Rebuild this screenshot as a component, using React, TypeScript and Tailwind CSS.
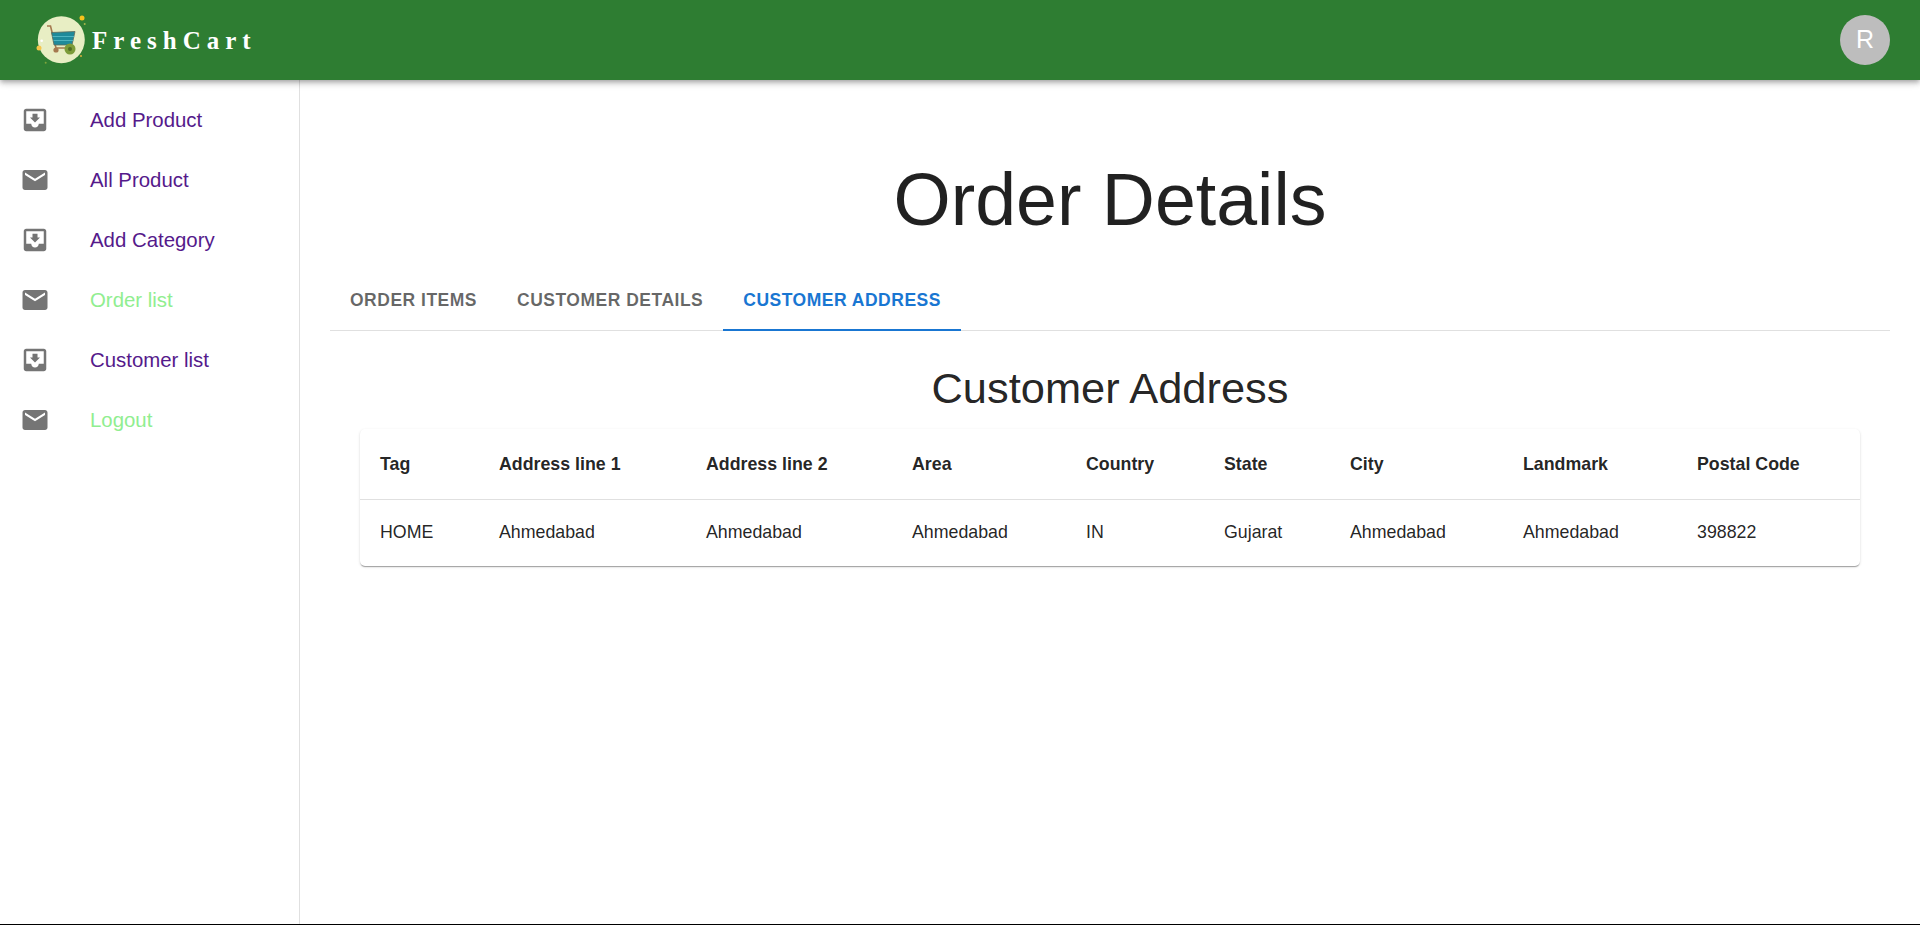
import type { ReactNode } from "react";

const sans = "font-['Liberation_Sans',Arial,sans-serif]";

function InboxIcon() {
  return (
    <svg viewBox="0 0 24 24" className="w-[30px] h-[30px] fill-[#757575]">
      <path d="M19 3H4.99c-1.11 0-1.98.9-1.98 2L3 19c0 1.1.88 2 1.99 2H19c1.1 0 2-.9 2-2V5c0-1.1-.9-2-2-2zm0 12h-4c0 1.66-1.35 3-3 3s-3-1.34-3-3H4.99V5H19v10zm-3-5h-2V7h-4v3H8l4 4 4-4z" />
    </svg>
  );
}

function MailIcon() {
  return (
    <svg viewBox="0 0 24 24" className="w-[30px] h-[30px] fill-[#757575]">
      <path d="M20 4H4c-1.1 0-1.99.9-1.99 2L2 18c0 1.1.9 2 2 2h16c1.1 0 2-.9 2-2V6c0-1.1-.9-2-2-2zm0 4l-8 5-8-5V6l8 5 8-5v2z" />
    </svg>
  );
}

function Logo() {
  return (
    <svg viewBox="0 0 60 60" className="w-[60px] h-[60px]">
      <circle cx="29.3" cy="29.7" r="23.5" fill="#e8eec4" />
      <circle cx="50" cy="8" r="2.5" fill="#f6c21c" />
      <circle cx="52.7" cy="14" r="1" fill="#a8b84a" />
      <circle cx="7" cy="38" r="2.5" fill="#f6c64a" />
      <circle cx="9.7" cy="30.7" r="1.3" fill="#ffffff" />
      <circle cx="13.7" cy="52.7" r="1" fill="#7fa53c" />
      <circle cx="49" cy="46" r="1" fill="#d8b13a" />
      <path d="M15 16h3.5l5.5 22h14" fill="none" stroke="#a5794f" strokeWidth="1.6" />
      <path d="M19.5 22.5 43 21.5 40 35H22z" fill="#1f8a9a" stroke="#5f6a5a" strokeWidth="0.8" />
      <path d="M20.5 26.5h21.7M21.5 30.5h19.8" stroke="#4fb4c0" strokeWidth="1" />
      <circle cx="24" cy="40" r="2.6" fill="#a5794f" />
      <circle cx="38" cy="39" r="5.5" fill="#7c9c3a" />
      <circle cx="38" cy="39" r="2" fill="#4f6d24" />
    </svg>
  );
}

const navItems = [
  { label: "Add Product", icon: <InboxIcon />, color: "text-[#551a8b]" },
  { label: "All Product", icon: <MailIcon />, color: "text-[#551a8b]" },
  { label: "Add Category", icon: <InboxIcon />, color: "text-[#551a8b]" },
  { label: "Order list", icon: <MailIcon />, color: "text-[#90ee90]" },
  { label: "Customer list", icon: <InboxIcon />, color: "text-[#551a8b]" },
  { label: "Logout", icon: <MailIcon />, color: "text-[#90ee90]" },
];

function NavItem({ label, icon, color }: { label: string; icon: ReactNode; color: string }) {
  return (
    <a className="flex items-center h-[60px] pl-5 cursor-pointer">
      <span className="w-[70px] flex">{icon}</span>
      <span className={`text-[20.4px] ${color}`}>{label}</span>
    </a>
  );
}

const columns = [
  { name: "Tag", value: "HOME", width: "w-[119px]" },
  { name: "Address line 1", value: "Ahmedabad", width: "w-[207px]" },
  { name: "Address line 2", value: "Ahmedabad", width: "w-[206px]" },
  { name: "Area", value: "Ahmedabad", width: "w-[174px]" },
  { name: "Country", value: "IN", width: "w-[138px]" },
  { name: "State", value: "Gujarat", width: "w-[126px]" },
  { name: "City", value: "Ahmedabad", width: "w-[173px]" },
  { name: "Landmark", value: "Ahmedabad", width: "w-[174px]" },
  { name: "Postal Code", value: "398822", width: "w-[183px]" },
];

export default function App() {
  return (
    <div className={`${sans} h-screen flex flex-col border-b border-black bg-white text-black/87`}>
      <header className="h-20 shrink-0 flex items-center justify-between bg-[#2e7d32] pl-8 pr-[30px] z-10 shadow-[0_2px_4px_-1px_rgba(0,0,0,0.2),0_4px_5px_0_rgba(0,0,0,0.14),0_1px_10px_0_rgba(0,0,0,0.12)]">
        <div className="flex items-center">
          <Logo />
          <span className="font-['Liberation_Serif',serif] font-bold text-[25px] tracking-[6px] text-white mt-[2px]">
            FreshCart
          </span>
        </div>
        <div className="w-[50px] h-[50px] rounded-full bg-[#bdbdbd] flex items-center justify-center text-[25px] text-white">
          R
        </div>
      </header>

      <div className="flex flex-1 min-h-0">
        <aside className="w-[300px] shrink-0 border-r border-[#e0e0e0] pt-[10px]">
          {navItems.map((item) => (
            <NavItem key={item.label} {...item} />
          ))}
        </aside>

        <main className="flex-1 p-[30px]">
          <h1 className="mt-[45px] text-center text-[73.5px] leading-[90px]">Order Details</h1>

          <div className="mt-[26px] flex h-[60px] border-b border-[#e0e0e0] text-[17.5px] font-bold tracking-[0.5px]">
            <div className="px-5 flex items-center text-black/60">ORDER ITEMS</div>
            <div className="px-5 flex items-center text-black/60">CUSTOMER DETAILS</div>
            <div className="px-5 flex items-center text-[#1976d2] border-b-[2.5px] border-[#1976d2] -mb-px">CUSTOMER ADDRESS</div>
          </div>

          <h2 className="mt-[32px] text-center text-[43.4px] leading-[50px]">Customer Address</h2>

          <div className="mx-[30px] mt-[16px] rounded-[5px] bg-white shadow-[0_2px_1px_-1px_rgba(0,0,0,0.2),0_1px_1px_0_rgba(0,0,0,0.14),0_1px_3px_0_rgba(0,0,0,0.12)]">
            <table className="w-full table-fixed text-[17.8px] text-left">
              <thead>
                <tr className="h-[70px] border-b border-[#e0e0e0]">
                  {columns.map((col) => (
                    <th key={col.name} className={`pl-5 pt-[2px] font-bold ${col.width}`}>{col.name}</th>
                  ))}
                </tr>
              </thead>
              <tbody>
                <tr className="h-[67px]">
                  {columns.map((col) => (
                    <td key={col.name} className="pl-5">{col.value}</td>
                  ))}
                </tr>
              </tbody>
            </table>
          </div>
        </main>
      </div>
    </div>
  );
}
